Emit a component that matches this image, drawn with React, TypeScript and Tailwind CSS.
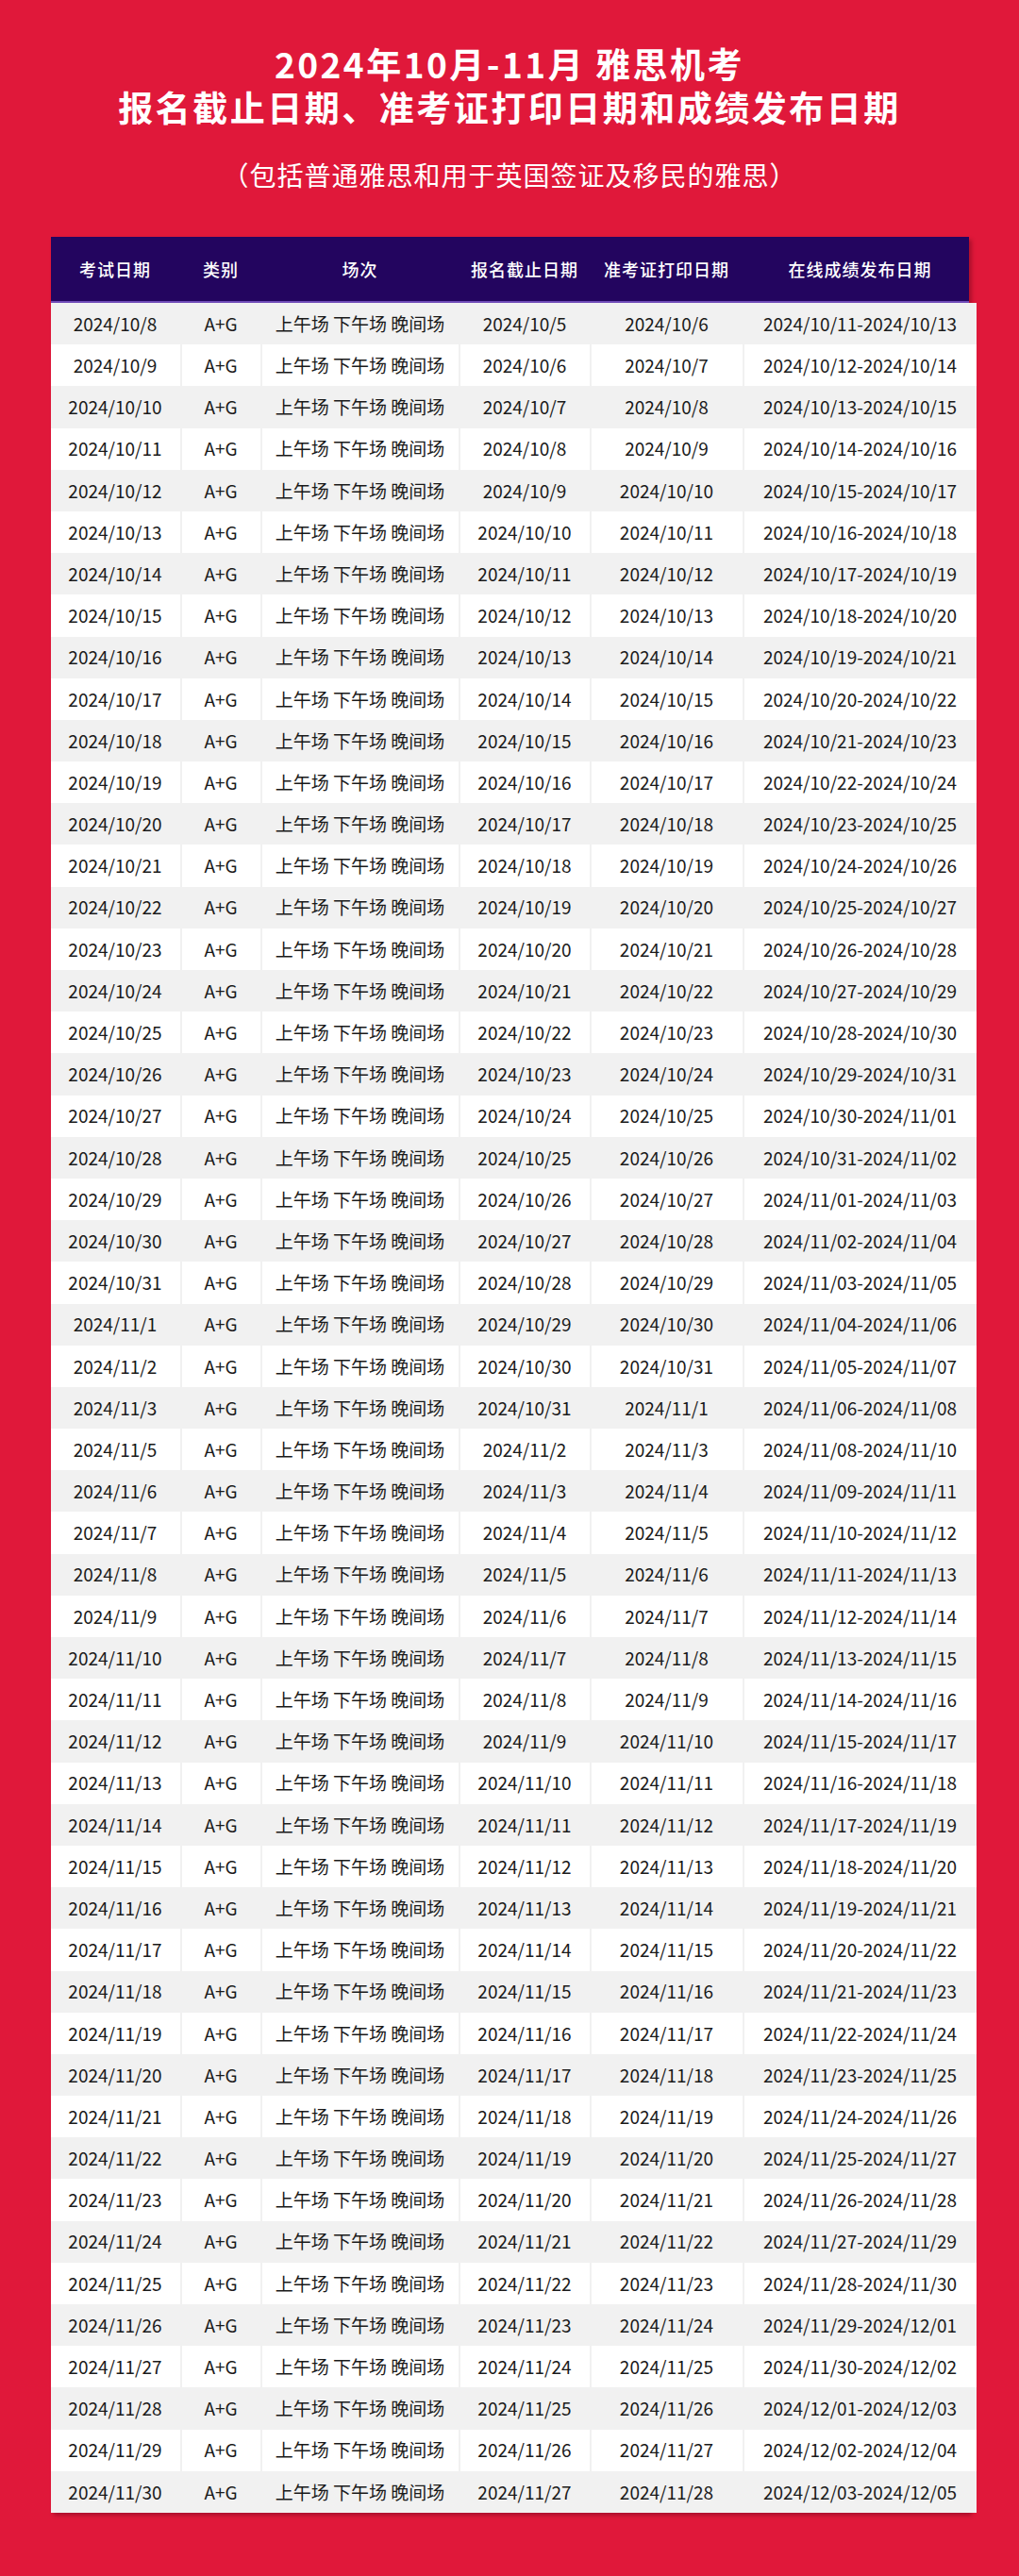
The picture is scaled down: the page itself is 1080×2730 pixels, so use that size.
import React from 'react';

type Row = [string, string, string, string];

// exam date, registration deadline, admission ticket, result window
const rows: Row[] = [
  ['2024/10/8', '2024/10/5', '2024/10/6', '2024/10/11-2024/10/13'],
  ['2024/10/9', '2024/10/6', '2024/10/7', '2024/10/12-2024/10/14'],
  ['2024/10/10', '2024/10/7', '2024/10/8', '2024/10/13-2024/10/15'],
  ['2024/10/11', '2024/10/8', '2024/10/9', '2024/10/14-2024/10/16'],
  ['2024/10/12', '2024/10/9', '2024/10/10', '2024/10/15-2024/10/17'],
  ['2024/10/13', '2024/10/10', '2024/10/11', '2024/10/16-2024/10/18'],
  ['2024/10/14', '2024/10/11', '2024/10/12', '2024/10/17-2024/10/19'],
  ['2024/10/15', '2024/10/12', '2024/10/13', '2024/10/18-2024/10/20'],
  ['2024/10/16', '2024/10/13', '2024/10/14', '2024/10/19-2024/10/21'],
  ['2024/10/17', '2024/10/14', '2024/10/15', '2024/10/20-2024/10/22'],
  ['2024/10/18', '2024/10/15', '2024/10/16', '2024/10/21-2024/10/23'],
  ['2024/10/19', '2024/10/16', '2024/10/17', '2024/10/22-2024/10/24'],
  ['2024/10/20', '2024/10/17', '2024/10/18', '2024/10/23-2024/10/25'],
  ['2024/10/21', '2024/10/18', '2024/10/19', '2024/10/24-2024/10/26'],
  ['2024/10/22', '2024/10/19', '2024/10/20', '2024/10/25-2024/10/27'],
  ['2024/10/23', '2024/10/20', '2024/10/21', '2024/10/26-2024/10/28'],
  ['2024/10/24', '2024/10/21', '2024/10/22', '2024/10/27-2024/10/29'],
  ['2024/10/25', '2024/10/22', '2024/10/23', '2024/10/28-2024/10/30'],
  ['2024/10/26', '2024/10/23', '2024/10/24', '2024/10/29-2024/10/31'],
  ['2024/10/27', '2024/10/24', '2024/10/25', '2024/10/30-2024/11/01'],
  ['2024/10/28', '2024/10/25', '2024/10/26', '2024/10/31-2024/11/02'],
  ['2024/10/29', '2024/10/26', '2024/10/27', '2024/11/01-2024/11/03'],
  ['2024/10/30', '2024/10/27', '2024/10/28', '2024/11/02-2024/11/04'],
  ['2024/10/31', '2024/10/28', '2024/10/29', '2024/11/03-2024/11/05'],
  ['2024/11/1', '2024/10/29', '2024/10/30', '2024/11/04-2024/11/06'],
  ['2024/11/2', '2024/10/30', '2024/10/31', '2024/11/05-2024/11/07'],
  ['2024/11/3', '2024/10/31', '2024/11/1', '2024/11/06-2024/11/08'],
  ['2024/11/5', '2024/11/2', '2024/11/3', '2024/11/08-2024/11/10'],
  ['2024/11/6', '2024/11/3', '2024/11/4', '2024/11/09-2024/11/11'],
  ['2024/11/7', '2024/11/4', '2024/11/5', '2024/11/10-2024/11/12'],
  ['2024/11/8', '2024/11/5', '2024/11/6', '2024/11/11-2024/11/13'],
  ['2024/11/9', '2024/11/6', '2024/11/7', '2024/11/12-2024/11/14'],
  ['2024/11/10', '2024/11/7', '2024/11/8', '2024/11/13-2024/11/15'],
  ['2024/11/11', '2024/11/8', '2024/11/9', '2024/11/14-2024/11/16'],
  ['2024/11/12', '2024/11/9', '2024/11/10', '2024/11/15-2024/11/17'],
  ['2024/11/13', '2024/11/10', '2024/11/11', '2024/11/16-2024/11/18'],
  ['2024/11/14', '2024/11/11', '2024/11/12', '2024/11/17-2024/11/19'],
  ['2024/11/15', '2024/11/12', '2024/11/13', '2024/11/18-2024/11/20'],
  ['2024/11/16', '2024/11/13', '2024/11/14', '2024/11/19-2024/11/21'],
  ['2024/11/17', '2024/11/14', '2024/11/15', '2024/11/20-2024/11/22'],
  ['2024/11/18', '2024/11/15', '2024/11/16', '2024/11/21-2024/11/23'],
  ['2024/11/19', '2024/11/16', '2024/11/17', '2024/11/22-2024/11/24'],
  ['2024/11/20', '2024/11/17', '2024/11/18', '2024/11/23-2024/11/25'],
  ['2024/11/21', '2024/11/18', '2024/11/19', '2024/11/24-2024/11/26'],
  ['2024/11/22', '2024/11/19', '2024/11/20', '2024/11/25-2024/11/27'],
  ['2024/11/23', '2024/11/20', '2024/11/21', '2024/11/26-2024/11/28'],
  ['2024/11/24', '2024/11/21', '2024/11/22', '2024/11/27-2024/11/29'],
  ['2024/11/25', '2024/11/22', '2024/11/23', '2024/11/28-2024/11/30'],
  ['2024/11/26', '2024/11/23', '2024/11/24', '2024/11/29-2024/12/01'],
  ['2024/11/27', '2024/11/24', '2024/11/25', '2024/11/30-2024/12/02'],
  ['2024/11/28', '2024/11/25', '2024/11/26', '2024/12/01-2024/12/03'],
  ['2024/11/29', '2024/11/26', '2024/11/27', '2024/12/02-2024/12/04'],
  ['2024/11/30', '2024/11/27', '2024/11/28', '2024/12/03-2024/12/05'],
];

const headers = ['考试日期', '类别', '场次', '报名截止日期', '准考证打印日期', '在线成绩发布日期'];

const cols = 'grid grid-cols-[137px_83px_208px_137px_160px_246px] gap-x-[2px]';

const title = '2024年10月-11月 雅思机考\n报名截止日期、准考证打印日期和成绩发布日期';

export default function App() {
  return (
    <div
      className="w-[1080px] h-[2730px] bg-[#e0183a] flex flex-col items-center"
      style={{ fontFamily: '"Noto Sans CJK SC", "Noto Sans", sans-serif' }}
    >
      {/* Title */}
      <div className="pt-[44px] flex flex-col items-center text-white">
        <h1 className="text-[37px] font-bold leading-[46px] tracking-[2.5px] text-center whitespace-pre-line">
          {title}
        </h1>
        <p className="mt-[32px] text-[28px] leading-[34px] tracking-[1px]">（包括普通雅思和用于英国签证及移民的雅思）</p>
      </div>

      {/* Table */}
      <div className="mt-[49px] w-[973px] bg-[#ebebeb] shadow-[3px_3px_4px_rgba(80,0,20,0.35)]">
        <div className={`${cols} h-[70px] bg-[#23055f] border-b-[2px] border-[#6f4bb8] items-center`}>
          {headers.map((h) => (
            <div key={h} className="text-center text-white text-[18px] font-medium tracking-[1px]">
              {h}
            </div>
          ))}
        </div>
        {rows.map((r, i) => {
          const cell = i % 2 === 0 ? 'bg-[#f1f1f1]' : 'bg-white';
          const cells = [r[0], 'A+G', '上午场 下午场 晚间场', r[1], r[2], r[3]];
          return (
            <div key={r[0]} className={`${cols} h-[44.2px] bg-[#f1f1f1]`}>
              {cells.map((c, j) => (
                <div
                  key={j}
                  className={`${cell} flex items-center justify-center text-[19px] text-[#1a1a1a] whitespace-nowrap`}
                >
                  {c}
                </div>
              ))}
            </div>
          );
        })}
      </div>
    </div>
  );
}
